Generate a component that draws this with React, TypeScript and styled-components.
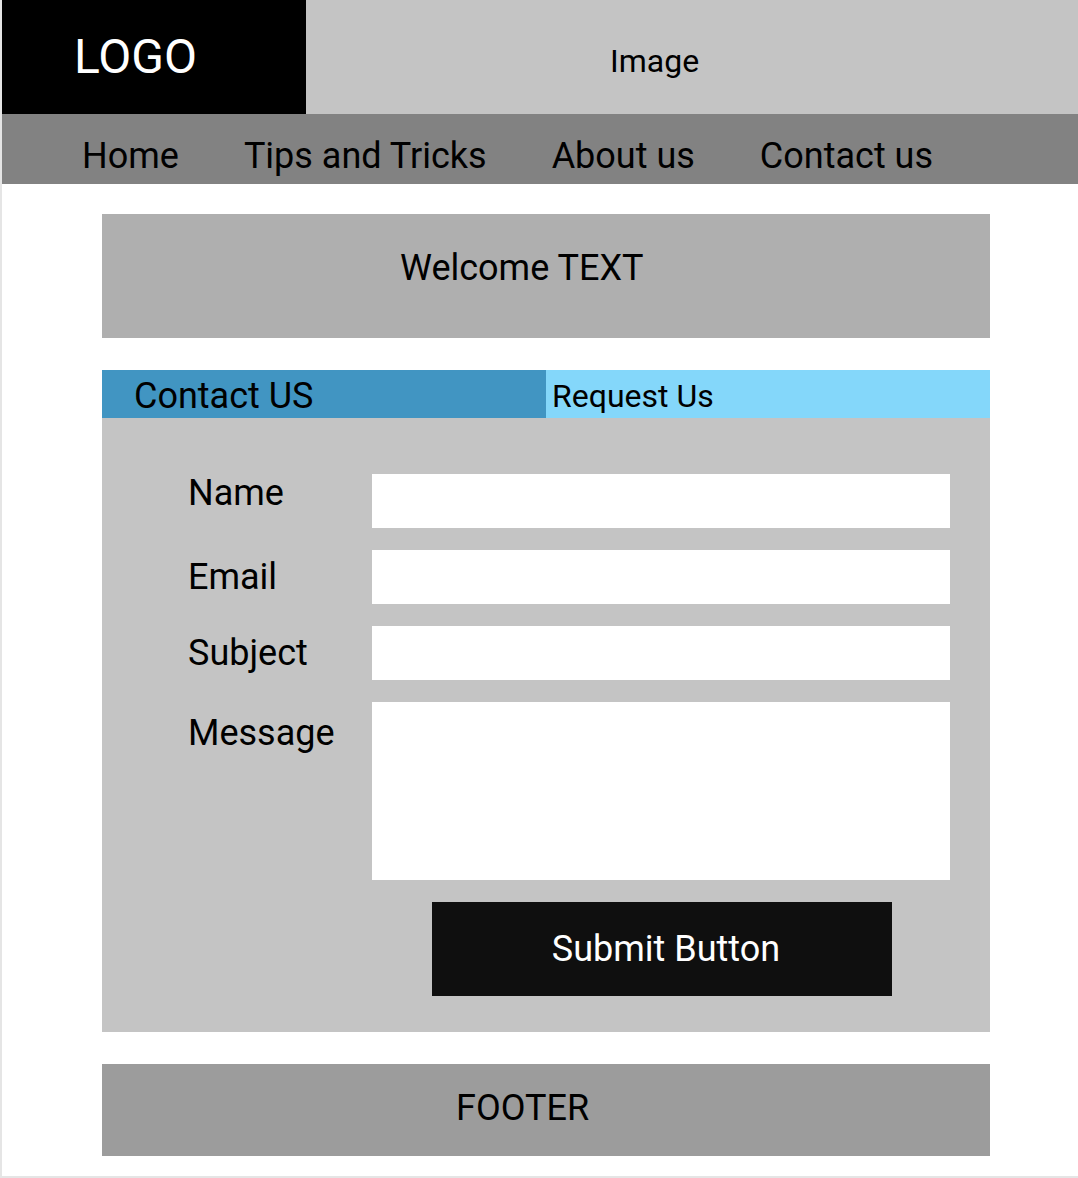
import React from "react"
import styled, { createGlobalStyle } from "styled-components"

const GlobalStyle = createGlobalStyle`
  html, body {
    margin: 0;
    padding: 0;
    background: #e5e5e5;
    font-family: Roboto, "Liberation Sans", sans-serif;
  }
  * {
    box-sizing: border-box;
  }
`

const Frame = styled.div`
  margin-left: 2px;
  width: 1076px;
  height: 1176px;
  background: #ffffff;
  display: flex;
  flex-direction: column;
`

const Header = styled.header`
  display: grid;
  grid-template-columns: 304px 1fr;
  height: 114px;
`

const Logo = styled.div`
  background: #000000;
  color: #ffffff;
  font-size: 48px;
  display: flex;
  align-items: center;
  padding: 0 0 2px 72px;
`

const Banner = styled.div`
  background: #c4c4c4;
  color: #000000;
  font-size: 32px;
  display: flex;
  align-items: center;
  padding: 8px 0 0 304px;
`

const Nav = styled.nav`
  background: #828282;
  height: 70px;
  display: flex;
  align-items: center;
  gap: 65px;
  padding: 14px 0 0 80px;
`

const NavLink = styled.a`
  color: #000000;
  font-size: 36px;
  text-decoration: none;
`

const Content = styled.main`
  display: flex;
  flex-direction: column;
  gap: 32px;
  padding: 30px 0 0 100px;
  width: 988px;
`

const Welcome = styled.section`
  background: #afafaf;
  height: 124px;
  font-size: 36px;
  padding: 33px 0 0 298px;
`

const ContactCard = styled.section`
  display: flex;
  flex-direction: column;
`

const Tabs = styled.div`
  display: grid;
  grid-template-columns: 1fr 1fr;
  height: 48px;
`

const Tab = styled.div<{ $active?: boolean }>`
  background: ${p => (p.$active ? "#4195c2" : "#84d7fa")};
  font-size: ${p => (p.$active ? "36px" : "32px")};
  padding: 3px 0 0 ${p => (p.$active ? "32px" : "6px")};
  display: flex;
  align-items: center;
`

const FormPanel = styled.form`
  background: #c4c4c4;
  height: 614px;
  padding: 56px 40px 0 86px;
  display: flex;
  flex-direction: column;
  gap: 22px;
`

const Row = styled.div`
  display: flex;
  align-items: flex-start;
`

const Label = styled.label<{ $shift: number }>`
  width: 184px;
  font-size: 36px;
  margin-top: ${p => p.$shift}px;
`

const Input = styled.input`
  width: 578px;
  height: 54px;
  border: none;
  background: #ffffff;
  margin: 0;
`

const TextArea = styled.textarea`
  width: 578px;
  height: 178px;
  border: none;
  background: #ffffff;
  resize: none;
  margin: 0;
  display: block;
`

const Submit = styled.button`
  margin-left: 244px;
  width: 460px;
  height: 94px;
  background: #0f0f0f;
  color: #ffffff;
  border: none;
  font-family: Roboto, "Liberation Sans", sans-serif;
  font-size: 36px;
  padding: 0 0 0 8px;
`

const Footer = styled.footer`
  background: #9c9c9c;
  height: 92px;
  font-size: 36px;
  display: flex;
  align-items: center;
  padding: 0 0 5px 354px;
`

const fields = [
  { label: "Name", shift: -2 },
  { label: "Email", shift: 6 },
  { label: "Subject", shift: 6 },
]

export default function App() {
  return (
    <>
      <GlobalStyle />
      <Frame>
        <Header>
          <Logo>LOGO</Logo>
          <Banner>Image</Banner>
        </Header>
        <Nav>
          <NavLink href="#">Home</NavLink>
          <NavLink href="#">Tips and Tricks</NavLink>
          <NavLink href="#">About us</NavLink>
          <NavLink href="#">Contact us</NavLink>
        </Nav>
        <Content>
          <Welcome>Welcome TEXT</Welcome>
          <ContactCard>
            <Tabs>
              <Tab $active>Contact US</Tab>
              <Tab>Request Us</Tab>
            </Tabs>
            <FormPanel onSubmit={e => e.preventDefault()}>
              {fields.map(f => (
                <Row key={f.label}>
                  <Label $shift={f.shift}>{f.label}</Label>
                  <Input />
                </Row>
              ))}
              <Row>
                <Label $shift={10}>Message</Label>
                <TextArea />
              </Row>
              <Row>
                <Submit type="submit">Submit Button</Submit>
              </Row>
            </FormPanel>
          </ContactCard>
          <Footer>FOOTER</Footer>
        </Content>
      </Frame>
    </>
  )
}
